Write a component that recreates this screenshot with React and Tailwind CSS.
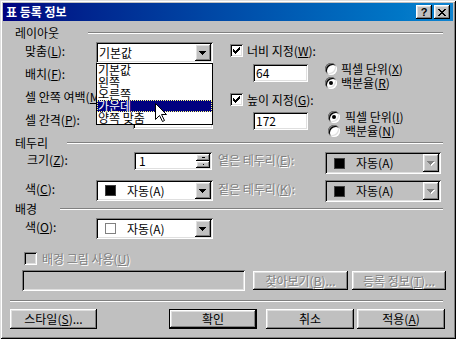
import React from "react";

const raised = "shadow-[inset_-1px_-1px_#000,inset_1px_1px_#fff,inset_-2px_-2px_#808080,inset_2px_2px_#dfdfdf]";
const sunken = "shadow-[inset_1px_1px_#808080,inset_-1px_-1px_#fff,inset_2px_2px_#000,inset_-2px_-2px_#dfdfdf]";
const dim = "text-[#808080] [text-shadow:1px_1px_0_#fff]";

function Arrow({ disabled }) {
  const c = disabled ? "#808080" : "#000";
  return (
    <svg width="8" height="5" viewBox="0 0 8 5" shapeRendering="crispEdges">
      {disabled && (
        <g fill="#fff">
          <rect x="1" y="1" width="7" height="1" />
          <rect x="2" y="2" width="5" height="1" />
          <rect x="3" y="3" width="3" height="1" />
          <rect x="4" y="4" width="1" height="1" />
        </g>
      )}
      <g fill={c}>
        <rect x="0" y="0" width="7" height="1" />
        <rect x="1" y="1" width="5" height="1" />
        <rect x="2" y="2" width="3" height="1" />
        <rect x="3" y="3" width="1" height="1" />
      </g>
    </svg>
  );
}

function Combo({ className = "", disabled, children, list }) {
  return (
    <div className={`relative shrink-0 flex p-[2px] ${disabled ? "bg-[#c0c0c0]" : "bg-white"} ${sunken} ${className}`}>
      <div className="flex-1 flex items-center min-w-0 whitespace-nowrap">{children}</div>
      <div className={`w-[16px] self-stretch bg-[#c0c0c0] flex items-center justify-center pt-[1px] ${raised}`}>
        <Arrow disabled={disabled} />
      </div>
      {list}
    </div>
  );
}

function Swatch({ white }) {
  return (
    <span
      className={`w-[11px] h-[11px] shrink-0 ml-[7px] mr-[11px] border ${
        white ? "bg-white border-[#808080]" : "bg-black border-[#404040]"
      }`}
    />
  );
}

function Field({ className = "", disabled, children }) {
  return (
    <div className={`shrink-0 flex items-center pl-[3px] ${disabled ? "bg-[#c0c0c0]" : "bg-white"} ${sunken} ${className}`}>
      {children}
    </div>
  );
}

function Check({ checked, disabled }) {
  return (
    <div className={`w-[13px] h-[13px] shrink-0 ${disabled ? "bg-[#c0c0c0]" : "bg-white"} ${sunken}`}>
      {checked && (
        <svg width="13" height="13" viewBox="0 0 13 13" shapeRendering="crispEdges">
          <g fill="#000">
            <rect x="3" y="5" width="1" height="3" />
            <rect x="4" y="6" width="1" height="3" />
            <rect x="5" y="7" width="1" height="3" />
            <rect x="6" y="6" width="1" height="3" />
            <rect x="7" y="5" width="1" height="3" />
            <rect x="8" y="4" width="1" height="3" />
            <rect x="9" y="3" width="1" height="3" />
          </g>
        </svg>
      )}
    </div>
  );
}

function Radio({ checked }) {
  return (
    <div className="w-[12px] h-[12px] shrink-0 rounded-full bg-white flex items-center justify-center shadow-[inset_1px_1px_#808080,inset_-1px_-1px_#fff,inset_2px_2px_#000,inset_-2px_-2px_#dfdfdf]">
      {checked && <div className="w-[4px] h-[4px] rounded-full bg-black" />}
    </div>
  );
}

function Btn({ className = "", disabled, def, children }) {
  const inner = (
    <div className={`w-full h-full flex items-center justify-center bg-[#c0c0c0] whitespace-nowrap ${raised} ${disabled ? dim : ""}`}>
      {children}
    </div>
  );
  if (def) {
    return <div className={`shrink-0 border border-black ${className}`}>{inner}</div>;
  }
  return <div className={`shrink-0 ${className}`}>{inner}</div>;
}

function Header({ label, w, className = "" }) {
  return (
    <div className={`h-[12px] shrink-0 flex items-center ${className}`}>
      <span className={`shrink-0 whitespace-nowrap ${w}`}>{label}</span>
      <div className="flex-1 h-[2px] border-t border-t-[#808080] border-b border-b-white" />
    </div>
  );
}

function TitleBtn({ children }) {
  return (
    <div className={`w-[16px] h-[14px] bg-[#c0c0c0] flex items-center justify-center ${raised}`}>{children}</div>
  );
}

export default function App() {
  const items = ["기본값", "왼쪽", "오른쪽", "가운데", "양쪽 맞춤"];

  // open drop-down of the 맞춤 combo
  const list = (
    <div className="absolute left-0 top-full w-[117px] bg-white border border-black z-10">
      {items.map((t, i) => (
        <div
          key={t}
          className={`h-[12px] leading-[12px] pl-[1px] whitespace-nowrap ${
            i === 3 ? "bg-[#000080] text-white outline-1 outline-dotted outline-[#ffff80] -outline-offset-1" : ""
          }`}
        >
          {t}
        </div>
      ))}
      <svg className="absolute left-[58px] top-[39px]" width="13" height="20" viewBox="0 0 13 20">
        <path
          d="M0.5 0.5 L0.5 16.5 L4.5 12.5 L7.5 18.5 L9.5 17.5 L6.5 11.5 L11.5 11.5 Z"
          fill="#fff"
          stroke="#000"
          strokeWidth="1"
        />
      </svg>
    </div>
  );

  return (
    <div className="w-[456px] h-[339px] bg-[#c0c0c0] p-[3px] flex flex-col overflow-hidden font-['Noto_Sans_CJK_KR',sans-serif] text-[12px] leading-[12px] text-black shadow-[inset_1px_1px_#dfdfdf,inset_-1px_-1px_#000,inset_2px_2px_#fff,inset_-2px_-2px_#808080]">
      {/* title bar */}
      <div className="h-[18px] shrink-0 flex items-center pl-[3px] pr-[3px] bg-linear-to-r from-[#000080] to-[#1084d0]">
        <span className="text-white font-bold whitespace-nowrap">표 등록 정보</span>
        <div className="ml-auto flex gap-[2px]">
          <TitleBtn>
            <span className="font-bold text-[11px] leading-[11px] font-['Liberation_Sans',sans-serif]">?</span>
          </TitleBtn>
          <TitleBtn>
            <svg width="8" height="7" viewBox="0 0 8 7" shapeRendering="crispEdges">
              <path d="M0 0h2v1h-2zM6 0h2v1h-2zM1 1h2v1h-2zM5 1h2v1h-2zM2 2h4v1h-4zM3 3h2v1h-2zM2 4h4v1h-4zM1 5h2v1h-2zM5 5h2v1h-2zM0 6h2v1h-2zM6 6h2v1h-2z" fill="#000" />
            </svg>
          </TitleBtn>
        </div>
      </div>

      <div className="flex-1 flex flex-col pl-[12px] pr-[10px]">
        <Header label="레이아웃" w="w-[73px]" className="mt-[6px]" />

        {/* layout block */}
        <div className="h-[98px] shrink-0 flex">
          <div className="w-[213px] shrink-0 flex">
            <div className="w-[81px] shrink-0 pl-[10px] flex flex-col overflow-hidden">
              <div className="h-[23px] flex items-center whitespace-nowrap">맞춤(<u>L</u>):</div>
              <div className="h-[23px] flex items-center whitespace-nowrap">배치(<u>F</u>):</div>
              <div className="h-[23px] flex items-center whitespace-nowrap">셀 안쪽 여백(<u>M</u>):</div>
              <div className="h-[23px] flex items-center whitespace-nowrap">셀 간격(<u>P</u>):</div>
            </div>
            <div className="w-[117px] shrink-0 flex flex-col">
              <Combo className="mt-[3px] h-[21px] w-[117px] z-10" list={list}>
                <span className="pl-[1px]">기본값</span>
              </Combo>
              <Combo className="mt-[2px] h-[21px] w-[117px]" />
              <Field className="mt-[3px] ml-[38px] w-[79px] h-[18px]" />
              <Field className="mt-[4px] ml-[37px] w-[80px] h-[18px]" />
            </div>
          </div>

          <div className="flex-1 flex flex-col">
            <div className="mt-[5px] h-[13px] flex items-center pl-[2px]">
              <Check checked />
              <span className="ml-[4px] whitespace-nowrap">너비 지정(<u>W</u>):</span>
            </div>
            <div className="mt-[5px] flex items-start">
              <Field className="ml-[25px] mt-[2px] w-[55px] h-[18px]">64</Field>
              <div className="ml-[17px] flex flex-col">
                <div className="h-[14px] flex items-center">
                  <Radio />
                  <span className="ml-[4px] whitespace-nowrap">픽셀 단위(<u>X</u>)</span>
                </div>
                <div className="h-[14px] flex items-center">
                  <Radio checked />
                  <span className="ml-[4px] whitespace-nowrap">백분율(<u>R</u>)</span>
                </div>
              </div>
            </div>
            <div className="mt-[3px] h-[13px] flex items-center pl-[2px]">
              <Check checked />
              <span className="ml-[4px] whitespace-nowrap">높이 지정(<u>G</u>):</span>
            </div>
            <div className="mt-[4px] flex items-start">
              <Field className="ml-[25px] mt-[2px] w-[55px] h-[18px]">172</Field>
              <div className="ml-[20px] flex flex-col">
                <div className="h-[14px] flex items-center">
                  <Radio checked />
                  <span className="ml-[5px] whitespace-nowrap">픽셀 단위(<u>I</u>)</span>
                </div>
                <div className="h-[13px] flex items-center">
                  <Radio />
                  <span className="ml-[5px] whitespace-nowrap">백분율(<u>N</u>)</span>
                </div>
              </div>
            </div>
          </div>
        </div>

        <Header label="테두리" w="w-[52px]" />

        <div className="mt-[3px] flex items-start shrink-0">
          <span className="ml-[12px] w-[107px] mt-[2px] shrink-0 whitespace-nowrap">크기(<u>Z</u>):</span>
          <div className={`w-[78px] h-[18px] shrink-0 bg-white flex items-center p-[2px] ${sunken}`}>
            <span className="flex-1 pl-[3px]">1</span>
            <div className="flex flex-col">
              <div className={`w-[14px] h-[7px] bg-[#c0c0c0] flex items-center justify-center ${raised}`}>
                <div className="w-[3px] h-[1px] bg-black" />
              </div>
              <div className={`w-[14px] h-[7px] bg-[#c0c0c0] flex items-center justify-center ${raised}`}>
                <div className="w-[1px] h-[1px] bg-black" />
              </div>
            </div>
          </div>
          <span className={`ml-[6px] w-[107px] mt-[2px] shrink-0 whitespace-nowrap ${dim}`}>옅은 테두리(<u>E</u>):</span>
          <Combo disabled className="w-[116px] h-[22px]">
            <Swatch />
            <span>자동(A)</span>
          </Combo>
        </div>

        <div className="mt-[6px] flex items-start shrink-0">
          <span className="ml-[10px] w-[71px] mt-[3px] shrink-0 whitespace-nowrap">색(<u>C</u>):</span>
          <Combo className="w-[117px] h-[21px]">
            <Swatch />
            <span>자동(A)</span>
          </Combo>
          <span className={`ml-[5px] w-[107px] mt-[3px] shrink-0 whitespace-nowrap ${dim}`}>짙은 테두리(<u>K</u>):</span>
          <Combo disabled className="w-[116px] h-[22px]">
            <Swatch />
            <span>자동(A)</span>
          </Combo>
        </div>

        <Header label="배경" w="w-[45px]" className="mt-[1px]" />

        <div className="mt-[3px] flex items-start shrink-0">
          <span className="ml-[10px] w-[71px] mt-[3px] shrink-0 whitespace-nowrap">색(<u>O</u>):</span>
          <Combo className="w-[117px] h-[21px]">
            <Swatch white />
            <span>자동(A)</span>
          </Combo>
        </div>

        <div className="mt-[13px] h-[13px] ml-[9px] flex items-center shrink-0">
          <Check disabled />
          <span className={`ml-[5px] whitespace-nowrap ${dim}`}>배경 그림 사용(<u>U</u>)</span>
        </div>

        <div className="mt-[5px] flex items-start shrink-0">
          <Field disabled className="ml-[7px] w-[223px] h-[21px]" />
          <Btn disabled className="ml-[8px] mt-[1px] w-[95px] h-[19px]">찾아보기(<u>B</u>)...</Btn>
          <Btn disabled className="ml-[4px] mt-[1px] w-[94px] h-[19px]">등록 정보(<u>T</u>)...</Btn>
        </div>

        <div className="mt-[9px] -ml-[5px] h-[2px] shrink-0 border-t border-t-[#808080] border-b border-b-white" />

        <div className="mt-[7px] -ml-[5px] flex shrink-0">
          <Btn className="w-[87px] h-[20px]">스타일(<u>S</u>)...</Btn>
          <Btn def className="ml-[72px] w-[88px] h-[20px]">확인</Btn>
          <Btn className="ml-[9px] w-[88px] h-[20px]">취소</Btn>
          <Btn className="ml-[3px] w-[88px] h-[20px]">적용(<u>A</u>)</Btn>
        </div>
      </div>
    </div>
  );
}
